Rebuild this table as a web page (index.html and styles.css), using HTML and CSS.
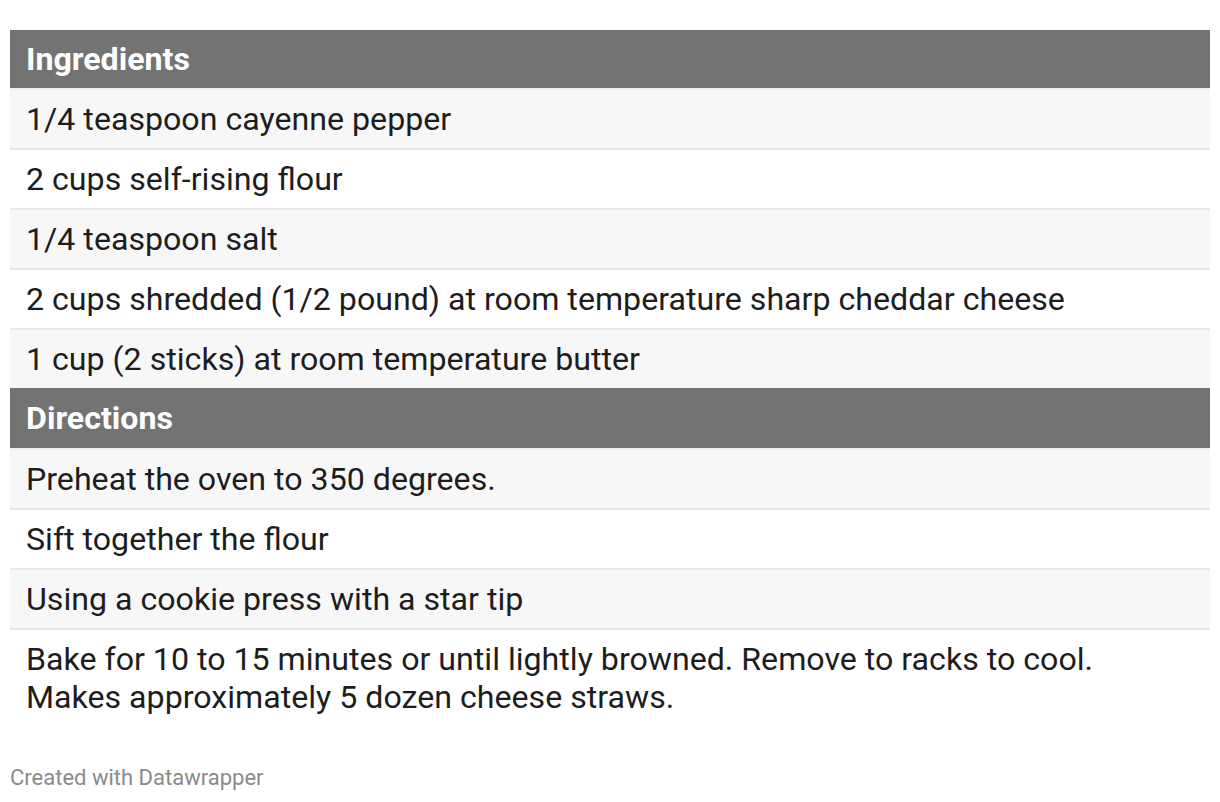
FILE: index.html
```html
<!DOCTYPE html>
<html>
<head>
<meta charset="utf-8">
<link rel="stylesheet" href="styles.css">
</head>
<body>
<div class="chart">
  <table class="recipe">
    <tbody>
      <tr class="head"><td>Ingredients</td></tr>
      <tr class="odd"><td>1/4 teaspoon cayenne pepper</td></tr>
      <tr class="even"><td>2 cups self-rising flour</td></tr>
      <tr class="odd"><td>1/4 teaspoon salt</td></tr>
      <tr class="even"><td>2 cups shredded (1/2 pound) at room temperature sharp cheddar cheese</td></tr>
      <tr class="odd prehead"><td>1 cup (2 sticks) at room temperature butter</td></tr>
      <tr class="head tall"><td>Directions</td></tr>
      <tr class="odd"><td>Preheat the oven to 350 degrees.</td></tr>
      <tr class="even"><td>Sift together the flour</td></tr>
      <tr class="odd"><td>Using a cookie press with a star tip</td></tr>
      <tr class="even last"><td>Bake for 10 to 15 minutes or until lightly browned. Remove to racks to cool.<br>Makes approximately 5 dozen cheese straws.</td></tr>
    </tbody>
  </table>
  <div class="footer">Created with Datawrapper</div>
</div>
</body>
</html>
```

FILE: styles.css
```css
html, body {
  margin: 0;
  padding: 0;
  background: #ffffff;
}
body {
  font-family: Roboto, "Liberation Sans", Arial, sans-serif;
  color: #1d1d1d;
}
.chart {
  padding: 30px 10px 0 10px;
}
.recipe {
  width: 1200px;
  border-collapse: collapse;
  border-spacing: 0;
}
.recipe td {
  padding: 10px 16px;
  font-size: 32.15px;
  line-height: 38px;
  border-bottom: 2px solid #e9e9e9;
  text-align: left;
  vertical-align: top;
}
.recipe tr.head td {
  background: #737373;
  color: #ffffff;
  font-weight: 700;
  border-bottom: 2px solid #eeeeee;
}
.recipe tr.head.tall td {
  padding-top: 11px;
  padding-bottom: 11px;
}
.recipe tr.odd td {
  background: #f7f7f7;
}
.recipe tr.even td {
  background: #ffffff;
}
.recipe tr.prehead td,
.recipe tr.last td {
  border-bottom: none;
}
.footer {
  margin-top: 40px;
  font-size: 22px;
  color: #8a8a8a;
  line-height: 24px;
}
```
